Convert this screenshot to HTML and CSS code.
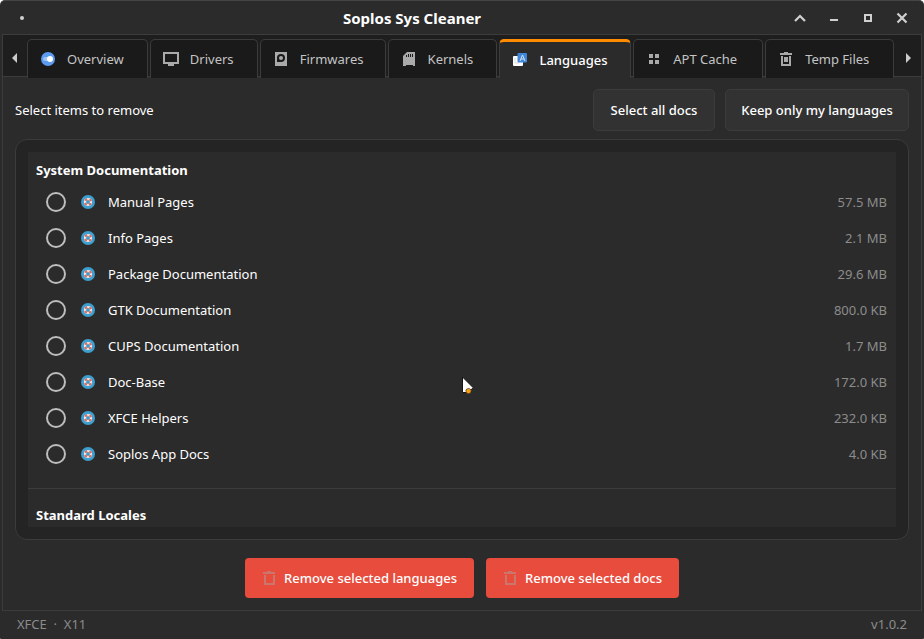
FILE: index.html
```html
<!DOCTYPE html>
<html lang="en">
<head>
<meta charset="utf-8">
<title>Soplos Sys Cleaner</title>
<link rel="stylesheet" href="styles.css">
</head>
<body>
<svg class="symbols" aria-hidden="true">
  <symbol id="ring" viewBox="0 0 14 14">
    <circle cx="7" cy="7" r="7" fill="#3d9fd0"/>
    <circle cx="7" cy="7" r="3" fill="none" stroke="#f3e9e6" stroke-width="2.2"/>
    <circle cx="7" cy="7" r="3" fill="none" stroke="#e0685c" stroke-width="2.2" stroke-dasharray="2.356 2.356" stroke-dashoffset="-1.178"/>
  </symbol>
  <symbol id="bin" viewBox="0 0 14 14">
    <path d="M1 1h4V0h4v1h4v2H1zM2 4h2v8h7V4h2v10H2z" fill="currentColor"/>
  </symbol>
</svg>
<div class="window">
  <header class="titlebar">
    <span class="menu-dot"></span>
    <h1>Soplos Sys Cleaner</h1>
    <div class="controls">
      <button aria-label="Roll up"><svg viewBox="0 0 12 12"><path d="M1 9l5-5 5 5" fill="none" stroke="#d0d0d0" stroke-width="2.2"/></svg></button>
      <button aria-label="Minimize"><svg viewBox="0 0 12 12"><path d="M2 7h8v2H2z" fill="#d0d0d0"/></svg></button>
      <button aria-label="Maximize"><svg viewBox="0 0 12 12"><path d="M3 3h6v6H3z" fill="none" stroke="#d0d0d0" stroke-width="2"/></svg></button>
      <button aria-label="Close"><svg viewBox="0 0 12 12"><path d="M1.500 1.500l9 9M10.500 1.500l-9 9" fill="none" stroke="#d0d0d0" stroke-width="2.200"/></svg></button>
    </div>
  </header>
  <main class="notebook">
    <nav class="tabbar">
      <button class="arrow" aria-label="Previous tab"><svg viewBox="0 0 6 10"><path d="M5 0v10L0 5z" fill="#ccc"/></svg></button>
      <div class="tabs" role="tablist">
        <button class="tab" role="tab"><svg viewBox="0 0 16 16"><circle cx="8" cy="8" r="7" fill="#5b9cf0"/><rect x="3" y="6" width="9" height="4" rx="2" fill="#9cc4f6"/><circle cx="10" cy="8" r="3" fill="#fff"/></svg>Overview</button>
        <button class="tab" role="tab"><svg viewBox="0 0 16 16"><path d="M0 1h16v12h-5v2H5v-2H0zM2 3v8h12V3z" fill="#aaa" fill-rule="evenodd"/></svg>Drivers</button>
        <button class="tab" role="tab"><svg viewBox="0 0 16 16"><path d="M2 1h12v14H2z" fill="#aaa"/><circle cx="8" cy="7" r="4" fill="#1a1a1a"/><path d="M4 8h3v3H4z" fill="#1a1a1a"/><circle cx="8" cy="7" r="2" fill="#aaa"/></svg>Firmwares</button>
        <button class="tab" role="tab"><svg viewBox="0 0 16 16"><path d="M6 1h8v14h-2v-1H5v1H2V5z" fill="#aaa"/><path d="M5.500 4v2M7.500 3v3M9.500 3v3M11.500 3v3" stroke="#1a1a1a" stroke-width="1"/></svg>Kernels</button>
        <button class="tab active" role="tab" aria-selected="true"><svg viewBox="0 0 16 16"><rect x="1" y="4" width="10" height="10" rx="1" fill="#fff"/><path d="M3 6v5h4" fill="none" stroke="#ddd"/><rect x="5.500" y="1" width="9.500" height="9.500" rx="1" fill="#3f86d8"/><path d="M8 9l2.500-6L13 9M9 7h3" fill="none" stroke="#cfe2f7"/></svg>Languages</button>
        <button class="tab" role="tab"><svg viewBox="0 0 16 16"><path d="M3 3h4v4H3zM9 3h4v4H9zM3 9h4v4H3zM9 9h4v4H9z" fill="#aaa"/></svg>APT Cache</button>
        <button class="tab" role="tab"><svg viewBox="0 0 16 16"><path d="M2 2h4V1h4v1h4v2H2zM3 5h10v10H3zM5 5v8h6V5z" fill="#aaa" fill-rule="evenodd"/><path d="M6 6h4v5H6z" fill="#aaa"/></svg>Temp Files</button>
      </div>
      <button class="arrow" aria-label="Next tab"><svg viewBox="0 0 6 10"><path d="M1 0v10l5-5z" fill="#ccc"/></svg></button>
    </nav>
    <section class="page">
      <div class="toolbar">
        <p>Select items to remove</p>
        <button class="plain docs">Select all docs</button>
        <button class="plain keep">Keep only my languages</button>
      </div>
      <div class="panel">
        <div class="list">
          <h2>System Documentation</h2>
          <label class="item"><input type="checkbox"><svg><use href="#ring"/></svg><span>Manual Pages</span><span class="size">57.5 MB</span></label>
          <label class="item"><input type="checkbox"><svg><use href="#ring"/></svg><span>Info Pages</span><span class="size">2.1 MB</span></label>
          <label class="item"><input type="checkbox"><svg><use href="#ring"/></svg><span>Package Documentation</span><span class="size">29.6 MB</span></label>
          <label class="item"><input type="checkbox"><svg><use href="#ring"/></svg><span>GTK Documentation</span><span class="size">800.0 KB</span></label>
          <label class="item"><input type="checkbox"><svg><use href="#ring"/></svg><span>CUPS Documentation</span><span class="size">1.7 MB</span></label>
          <label class="item"><input type="checkbox"><svg><use href="#ring"/></svg><span>Doc-Base</span><span class="size">172.0 KB</span></label>
          <label class="item"><input type="checkbox"><svg><use href="#ring"/></svg><span>XFCE Helpers</span><span class="size">232.0 KB</span></label>
          <label class="item"><input type="checkbox"><svg><use href="#ring"/></svg><span>Soplos App Docs</span><span class="size">4.0 KB</span></label>
          <hr>
          <h2>Standard Locales</h2>
        </div>
      </div>
      <div class="actions">
        <button class="danger languages"><svg><use href="#bin"/></svg>Remove selected languages</button>
        <button class="danger documents"><svg><use href="#bin"/></svg>Remove selected docs</button>
      </div>
    </section>
  </main>
  <footer class="status"><span>XFCE &nbsp;·&nbsp; X11</span><span>v1.0.2</span></footer>
  <svg class="pointer" viewBox="0 0 14 20" aria-hidden="true"><path d="M1.500 1v15.500h4l7-4.500z" fill="#fff" stroke="#151515"/><path d="M4.500 15c0-3.500 6-3.500 6 0z" fill="#777"/><circle cx="7.500" cy="15" r="2.600" fill="#f9a010" stroke="#222" stroke-width=".5"/></svg>
</div>
</body>
</html>
```
FILE: styles.css
```css
* { box-sizing: border-box; }

body {
  margin: 0;
  background: #fff;
  color: #fff;
  font: 13px/20px "Noto Sans", "Open Sans", sans-serif;
}

h1, h2, p { margin: 0; }

button {
  margin: 0;
  padding: 0;
  border: 0;
  background: none;
  color: inherit;
  font: inherit;
}

svg { display: block; flex: none; }

.symbols { position: absolute; width: 0; height: 0; }

.window {
  position: relative;
  display: flex;
  flex-direction: column;
  height: 100vh;
  background: #2b2b2b;
  border-top: 1px solid #454545;
  border-radius: 5px 5px 1px 1px;
  overflow: hidden;
}

.titlebar {
  display: grid;
  grid-template-columns: 10px 1fr auto;
  align-items: center;
  height: 33px;
  padding: 0 16px 0 20px;
}

.titlebar h1 {
  font-size: 15px;
  line-height: 20px;
  font-weight: 700;
  text-align: center;
}

.menu-dot { width: 4px; height: 4px; border-radius: 50%; background: #d0d0d0; }

.controls { display: flex; gap: 22px; }

.controls svg { width: 12px; height: 12px; }

.notebook {
  flex: 1;
  min-height: 0;
  display: flex;
  flex-direction: column;
  margin: 0 2px;
  border: 1px solid #3c3c3c;
}

.tabbar {
  display: flex;
  height: 42px;
  padding-top: 4px;
  background: #1e1e1e;
  border-bottom: 1px solid #3c3c3c;
}

.arrow { width: 24px; display: grid; place-items: center; }

.arrow svg { width: 6px; height: 10px; }

.arrow:last-child { width: 27px; }

.tabs {
  flex: 1;
  display: grid;
  grid-template-columns: 121fr 108fr 126fr 110fr 132fr 130fr 129fr;
  gap: 2px;
  height: 39px;
}

.tab {
  display: flex;
  align-items: center;
  gap: 11px;
  padding: 0 0 0 12px;
  border: 1px solid #3c3c3c;
  border-bottom: 0;
  border-radius: 5px 5px 0 0;
  background: #1a1a1a;
  color: #c4c4c4;
  white-space: nowrap;
}

.tab svg { width: 16px; height: 16px; }

.tab.active {
  border-top: 3px solid #ff8c00;
  background: #2b2b2b;
  color: #fff;
  font-weight: 500;
}

.page {
  flex: 1;
  min-height: 0;
  display: flex;
  flex-direction: column;
  padding: 12px;
}

.toolbar { display: flex; align-items: center; gap: 10px; }

.toolbar p { flex: 1; }

.plain {
  height: 42px;
  border: 1px solid #3c3c3c;
  border-radius: 5px;
  background: #323232;
  font-weight: 500;
}

.docs { min-width: 122px; }

.keep { min-width: 184px; }

.panel {
  flex: 1;
  min-height: 0;
  margin: 8px 0 18px;
  padding: 12px;
  border: 1px solid #3c3c3c;
  border-radius: 12px;
  background: #242424;
}

.list { height: 100%; overflow: hidden; background: #2b2b2b; }

.list h2 { padding: 8px 8px 4px; font-size: 13px; line-height: 20px; font-weight: 700; }

.item {
  display: flex;
  align-items: center;
  height: 36px;
  padding: 0 9px 0 18px;
}

.item input {
  appearance: none;
  width: 20px;
  height: 20px;
  margin: 0 15px 0 0;
  border: 2px solid #bdbdbd;
  border-radius: 50%;
}

.item svg { width: 14px; height: 14px; margin-right: 13px; }

.size { margin-left: auto; color: #8c8c8c; }

.list hr { margin: 16px 0 8px; border: 0; border-top: 1px solid #3c3c3c; }

.actions { display: flex; justify-content: center; gap: 12px; }

.danger {
  display: flex;
  align-items: center;
  justify-content: center;
  gap: 8px;
  height: 40px;
  border-radius: 4px;
  background: #e84c3d;
  font-weight: 500;
}

.danger svg { width: 14px; height: 14px; color: #cb766c; }

.languages { min-width: 229px; }

.documents { min-width: 193px; }

.status {
  display: flex;
  justify-content: space-between;
  height: 28px;
  padding: 3px 17px;
  color: #8c8c8c;
}

.pointer { position: absolute; left: 461px; top: 375px; width: 14px; height: 20px; }
```
